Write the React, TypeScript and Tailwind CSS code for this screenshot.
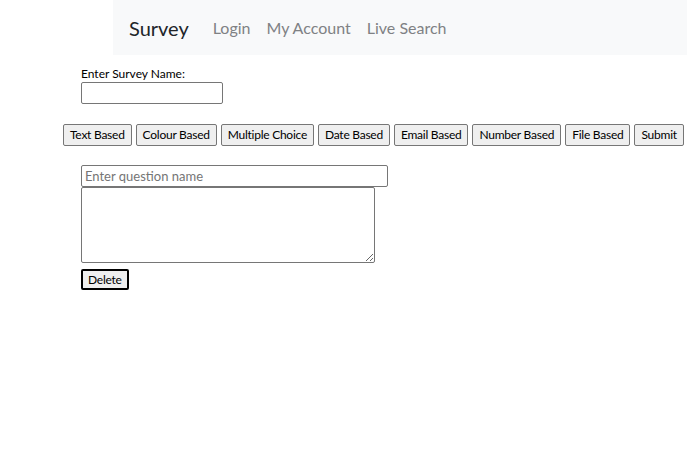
import React from 'react';

const TYPES = ['Text Based', 'Colour Based', 'Multiple Choice', 'Date Based', 'Email Based', 'Number Based', 'File Based', 'Submit'];

const btn = 'shrink-0 whitespace-nowrap h-[22px] px-[6px] bg-[#efefef] border border-[#767676] rounded-[2px] text-[12px] tracking-[-0.25px] leading-none text-black';

export default function App() {
  return (
    <div className="min-h-[453px] bg-white text-black" style={{ fontFamily: 'Lato, "Open Sans", sans-serif' }}>
      <nav className="ml-[113px] h-[55px] bg-[#f8f9fa] flex items-center pl-4">
        <span className="text-[20px] text-[#212529] mr-6">Survey</span>
        <div className="flex gap-4 text-[16px] text-[#7f8184]">
          <span>Login</span>
          <span>My Account</span>
          <span>Live Search</span>
        </div>
      </nav>

      <div className="ml-[81px] mt-[11px] flex flex-col">
        <label className="text-[12px] leading-[16px]">Enter Survey Name:</label>
        <input className="w-[142px] h-[22px] border border-[#767676] rounded-[2px] px-1 text-[13px]" />
      </div>

      <div className="ml-[63px] mt-[20px] flex gap-[4px]">
        {TYPES.map((t) => (
          <button key={t} className={btn}>{t}</button>
        ))}
      </div>

      <div className="ml-[81px] mt-[19px] flex flex-col items-start">
        <input
          placeholder="Enter question name"
          className="w-[307px] h-[22px] border border-[#767676] rounded-[2px] px-[3px] text-[13px] placeholder:text-[#757575]"
        />
        <textarea className="w-[294px] h-[76px] border border-[#767676] rounded-[2px] text-[13px]" />
        <button className="mt-[6px] h-[21px] px-[5px] bg-[#efefef] border-2 border-black rounded-[2px] text-[12px] tracking-[-0.25px] leading-none">Delete</button>
      </div>
    </div>
  );
}
